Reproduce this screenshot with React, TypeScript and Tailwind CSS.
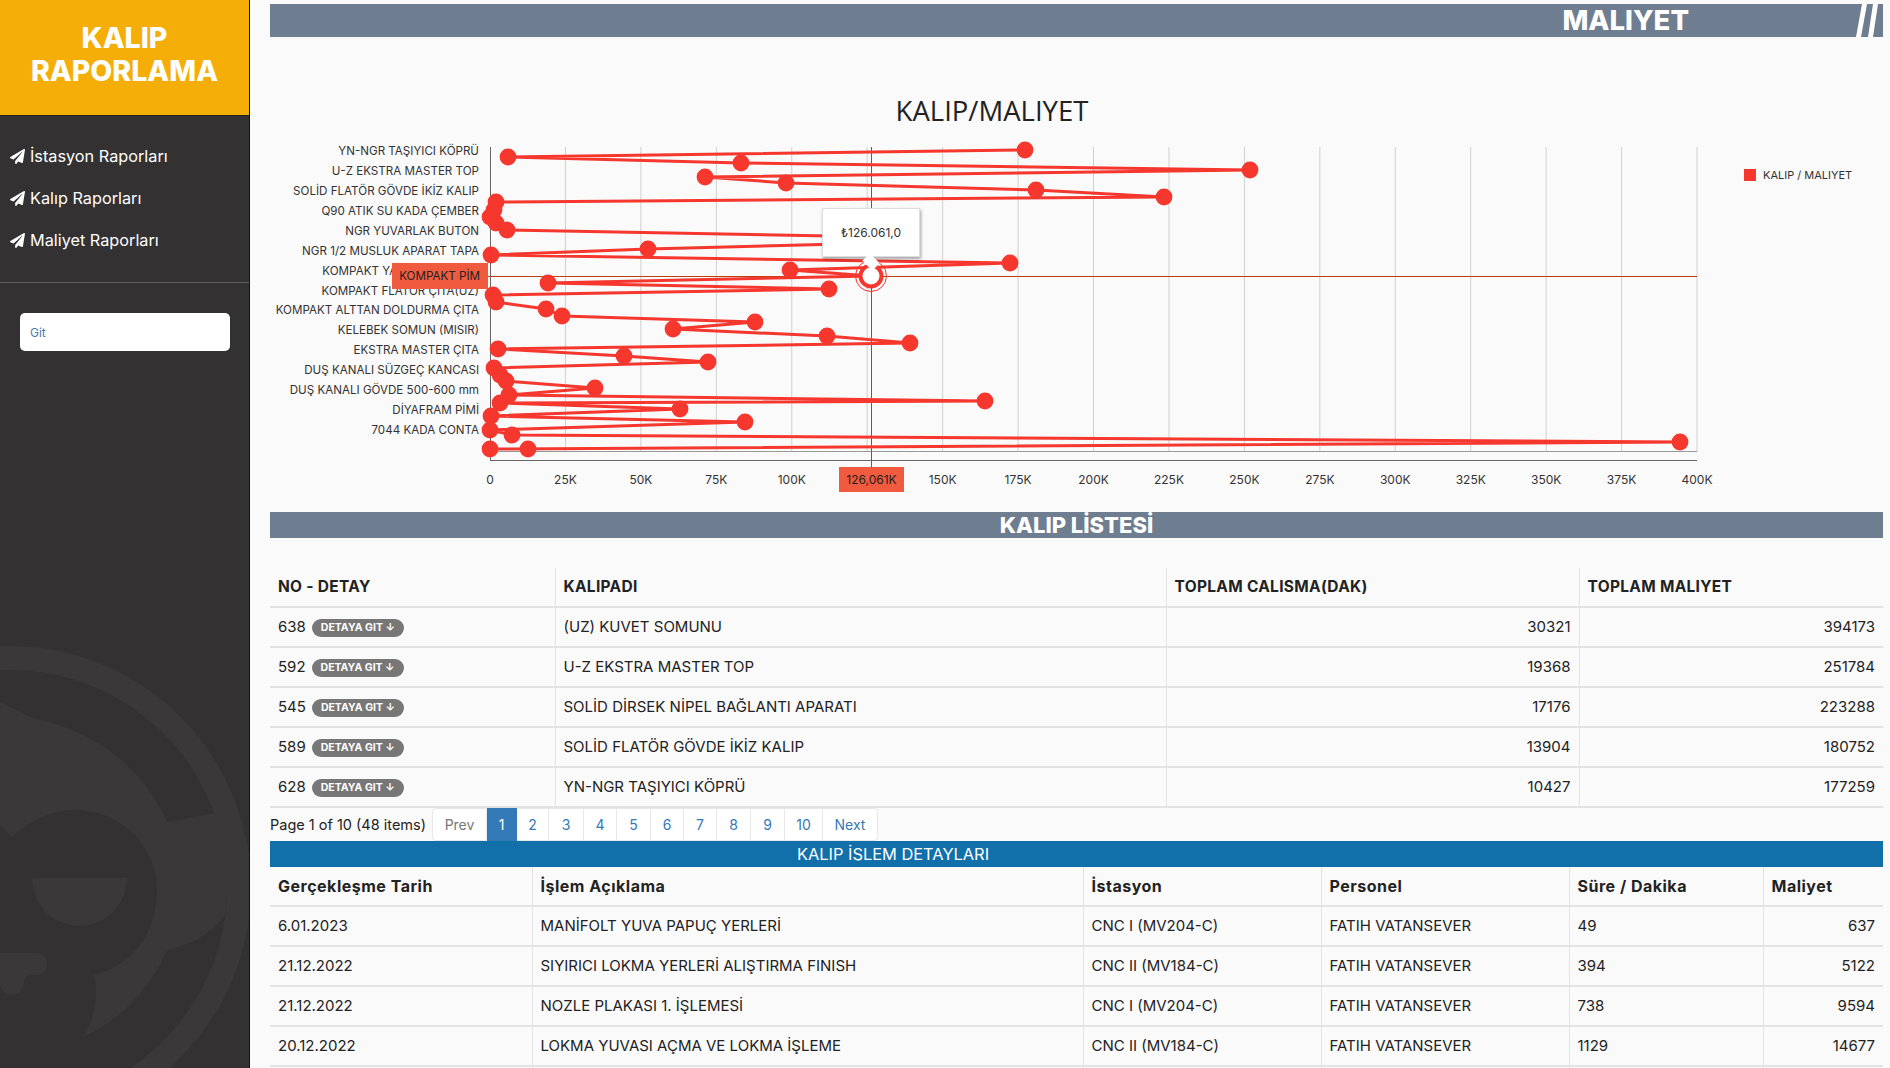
import React from 'react';
import { FaPaperPlane } from 'react-icons/fa';

const categories = [
  'YN-NGR TAŞIYICI KÖPRÜ',
  'U-Z EKSTRA MASTER TOP',
  'SOLİD FLATÖR GÖVDE İKİZ KALIP',
  'Q90 ATIK SU KADA ÇEMBER',
  'NGR YUVARLAK BUTON',
  'NGR 1/2 MUSLUK APARAT TAPA',
  'KOMPAKT YAN GÖVDE ÇITA',
  'KOMPAKT FLATÖR ÇITA(UZ)',
  'KOMPAKT ALTTAN DOLDURMA ÇITA',
  'KELEBEK SOMUN (MISIR)',
  'EKSTRA MASTER ÇITA',
  'DUŞ KANALI SÜZGEÇ KANCASI',
  'DUŞ KANALI GÖVDE 500-600 mm',
  'DİYAFRAM PİMİ',
  '7044 KADA CONTA',
];
const labelY = [151, 171, 191, 211, 231, 251, 271, 291, 310, 330, 350, 370, 390, 410, 430];

const points: [number, number][] = [
  [1025, 150], [508, 157], [741, 163], [1250, 170], [705, 177], [786, 183], [1036, 190], [1164, 197],
  [496, 202], [494, 210], [490, 217], [496, 223], [507, 230], [885, 237], [880, 243], [648, 249],
  [491, 255], [1010, 263], [790, 270], [871, 276], [548, 283], [829, 289], [493, 295], [496, 302],
  [546, 309], [562, 316], [755, 322], [673, 329], [827, 336], [910, 343], [498, 349], [624, 356],
  [708, 362], [494, 368], [500, 375], [506, 381], [595, 388], [509, 395], [985, 401], [500, 403],
  [680, 409], [491, 416], [745, 422], [490, 430], [512, 435], [1680, 442], [490, 449], [528, 449],
];

const ticks = ['0', '25K', '50K', '75K', '100K', '', '150K', '175K', '200K', '225K', '250K', '275K', '300K', '325K', '350K', '375K', '400K'];

const kalipRows = [
  ['638', '(UZ) KUVET SOMUNU', '30321', '394173'],
  ['592', 'U-Z EKSTRA MASTER TOP', '19368', '251784'],
  ['545', 'SOLİD DİRSEK NİPEL BAĞLANTI APARATI', '17176', '223288'],
  ['589', 'SOLİD FLATÖR GÖVDE İKİZ KALIP', '13904', '180752'],
  ['628', 'YN-NGR TAŞIYICI KÖPRÜ', '10427', '177259'],
];

const detayRows = [
  ['6.01.2023', 'MANİFOLT YUVA PAPUÇ YERLERİ', 'CNC I (MV204-C)', 'FATIH VATANSEVER', '49', '637'],
  ['21.12.2022', 'SIYIRICI LOKMA YERLERİ ALIŞTIRMA FINISH', 'CNC II (MV184-C)', 'FATIH VATANSEVER', '394', '5122'],
  ['21.12.2022', 'NOZLE PLAKASI 1. İŞLEMESİ', 'CNC I (MV204-C)', 'FATIH VATANSEVER', '738', '9594'],
  ['20.12.2022', 'LOKMA YUVASI AÇMA VE LOKMA İŞLEME', 'CNC II (MV184-C)', 'FATIH VATANSEVER', '1129', '14677'],
  ['', '', '', '', '', ''],
];

const pages = [
  { label: 'Prev', cls: 'w-[55px] bg-white border-[#e8e8e8] text-[#777] rounded-l-[4px] border-l' },
  { label: '1', cls: 'w-[30px] bg-[#337ab7] border-[#337ab7] text-white' },
  { label: '2', cls: 'w-[32px] bg-white border-[#e8e8e8] text-[#337ab7]' },
  { label: '3', cls: 'w-[35px] bg-white border-[#e8e8e8] text-[#337ab7]' },
  { label: '4', cls: 'w-[33px] bg-white border-[#e8e8e8] text-[#337ab7]' },
  { label: '5', cls: 'w-[34px] bg-white border-[#e8e8e8] text-[#337ab7]' },
  { label: '6', cls: 'w-[33px] bg-white border-[#e8e8e8] text-[#337ab7]' },
  { label: '7', cls: 'w-[33px] bg-white border-[#e8e8e8] text-[#337ab7]' },
  { label: '8', cls: 'w-[34px] bg-white border-[#e8e8e8] text-[#337ab7]' },
  { label: '9', cls: 'w-[34px] bg-white border-[#e8e8e8] text-[#337ab7]' },
  { label: '10', cls: 'w-[38px] bg-white border-[#e8e8e8] text-[#337ab7]' },
  { label: 'Next', cls: 'w-[55px] bg-white border-[#e8e8e8] text-[#337ab7] rounded-r-[4px]' },
];

const Sidebar = () => (
  <aside className="relative w-[250px] shrink-0 h-full bg-[#333132] border-r border-[#111] overflow-hidden flex flex-col">
    <svg className="absolute left-0 bottom-0" width="250" height="448" viewBox="0 0 250 448">
      <circle cx="10" cy="267" r="229" fill="none" stroke="#3a3839" strokeWidth="24" />
      <path
        d="M0 82 L35 99 C95 110 145 150 167 202 L215 193 A217 217 0 0 1 225 295 C210 315 190 325 167 330 C150 370 120 400 83 417 C95 400 98 375 94 355 C135 345 157 310 157 270 C157 225 120 190 75 190 C50 190 28 202 12 217 L0 205 Z"
        fill="#3a3839"
      />
      <path d="M32 258 H127 A47.5 48 0 0 1 32 258 Z" fill="#3a3839" />
      <path
        d="M0 333 H37 C44 333 47 339 47 344 C47 350 43 355 36 355 H30 C25 355 24 360 24 364 C23 371 17 375 11 375 C6 375 2 370 0 366 Z"
        fill="#3a3839"
      />
    </svg>
    <div className="relative h-[116px] bg-[#f5ae08] border-b border-[#222] flex items-center justify-center text-center text-white font-extrabold text-[28.5px] leading-[33px] pb-[7px]">
      <div>
        KALIP
        <br />
        RAPORLAMA
      </div>
    </div>
    <nav className="relative flex flex-col gap-[18px] pt-[28px] pl-[10px] pb-[30px] border-b border-[#5c5c5c] text-white text-[16.25px] leading-[24px]">
      {['İstasyon Raporları', 'Kalıp Raporları', 'Maliyet Raporları'].map((m) => (
        <a key={m} href="#" className="flex items-center gap-[5px]">
          <FaPaperPlane size={15} />
          {m}
        </a>
      ))}
    </nav>
    <div className="relative pt-[30px] pl-5 pr-[19px]">
      <input
        placeholder="Git"
        className="w-full h-[38px] bg-white rounded-[5px] px-[10px] text-[12px] placeholder:text-[#4d78b0] outline-none"
      />
    </div>
  </aside>
);

const Chart = () => (
  <div className="relative h-[475px]">
    <svg width="1613" height="475" viewBox="270 37 1613 475" className="block">
      <text x="992" y="121" textAnchor="middle" fontSize="27.5" fill="#222" className="font-['Open_Sans',sans-serif]">
        KALIP/MALIYET
      </text>
      {ticks.map((_, i) =>
        i > 0 ? <line key={i} x1={490 + i * 75.44} x2={490 + i * 75.44} y1="147" y2="452" stroke="#d0d0d0" /> : null
      )}
      <line x1="490.5" x2="490.5" y1="147" y2="461" stroke="#666" />
      <line x1="490" x2="1697" y1="451.5" y2="451.5" stroke="#999" />
      <line x1="490" x2="1697" y1="460.5" y2="460.5" stroke="#666" />
      {categories.map((c, i) => (
        <text key={c} x="479" y={labelY[i] + 4} textAnchor="end" fontSize="11.6" fill="#333">
          {c}
        </text>
      ))}
      {ticks.map((t, i) => (
        <text key={i} x={490 + i * 75.44} y="484" textAnchor="middle" fontSize="12" fill="#333">
          {t}
        </text>
      ))}
      <line x1="871.5" x2="871.5" y1="147" y2="467" stroke="#b8400f" />
      <line x1="488" x2="1697" y1="276.5" y2="276.5" stroke="#b8400f" />
      <polyline
        points={points.map((p) => p.join(',')).join(' ')}
        fill="none"
        stroke="#f5372e"
        strokeWidth="3"
        strokeLinejoin="round"
      />
      {points.map(([x, y], i) =>
        x === 871 ? null : <circle key={i} cx={x} cy={y} r="8.4" fill="#f5372e" />
      )}
      <circle cx="871" cy="276" r="15.5" fill="none" stroke="#f5372e" />
      <circle cx="871" cy="276" r="10.5" fill="#fff" stroke="#f5372e" strokeWidth="4" />
      <rect x="1744" y="169" width="12" height="12" fill="#f5372e" />
      <text x="1763" y="179" fontSize="11" fill="#333">
        KALIP / MALIYET
      </text>
    </svg>
    {/* crosshair labels and tooltip */}
    <div className="absolute left-[122px] top-[226px] w-[96px] h-[26px] bg-[#f05a3e] text-[#222] text-[11.6px] leading-[27px] text-right pr-[8px]">
      KOMPAKT PİM
    </div>
    <div className="absolute left-[569px] top-[430px] w-[65px] h-[25px] bg-[#f05a3e] text-[#222] text-[12px] leading-[25px] text-center">
      126,061K
    </div>
    <div className="absolute left-[552px] top-[171px] w-[98px] h-[49px] bg-white border border-[#ddd] shadow-[1px_2px_3px_rgba(0,0,0,0.35)] flex items-center justify-center text-[12px] text-[#333]">
      ₺126.061,0
      <div className="absolute left-[41px] top-[46px] w-[14px] h-[14px] bg-white rotate-45 scale-y-75" />
    </div>
  </div>
);

const SectionBar = ({ children }: { children: React.ReactNode }) => (
  <div className="h-[26px] bg-[#6e7d90] text-white text-center font-extrabold text-[22px] leading-[26px]">
    {children}
  </div>
);

const KalipTable = () => (
  <table className="w-full table-fixed mt-[30px] text-[15px] text-[#222]">
    <colgroup>
      <col className="w-[285px]" />
      <col className="w-[611px]" />
      <col className="w-[413px]" />
      <col className="w-[304px]" />
    </colgroup>
    <thead>
      <tr className="h-[39px] border-b-2 border-[#e3e3e3] text-left font-bold text-[15.5px] tracking-[0.3px]">
        <th className="px-2">NO - DETAY</th>
        <th className="px-2 border-l border-[#e3e3e3]">KALIPADI</th>
        <th className="px-2 border-l border-[#e3e3e3]">TOPLAM CALISMA(DAK)</th>
        <th className="px-2 border-l border-[#e3e3e3]">TOPLAM MALIYET</th>
      </tr>
    </thead>
    <tbody>
      {kalipRows.map((r) => (
        <tr key={r[0]} className="h-[40px] border-b-2 border-[#e3e3e3]">
          <td className="px-2">
            {r[0]}
            <span className="inline-block ml-[6px] align-[1px] h-[18px] w-[92px] rounded-full bg-[#777] text-white text-[10.5px] leading-[18px] font-bold text-center">
              DETAYA GIT ↓
            </span>
          </td>
          <td className="px-2 border-l border-[#e3e3e3]">{r[1]}</td>
          <td className="px-2 border-l border-[#e3e3e3] text-right">{r[2]}</td>
          <td className="px-2 border-l border-[#e3e3e3] text-right">{r[3]}</td>
        </tr>
      ))}
    </tbody>
  </table>
);

const Pagination = () => (
  <div className="flex items-center h-[33px] text-[14.5px] text-[#222]">
    <span className="w-[162px]">Page 1 of 10 (48 items)</span>
    <div className="flex h-full text-[14px]">
      {pages.map((p) => (
        <a key={p.label} href="#" className={`flex items-center justify-center border-y border-r ${p.cls}`}>
          {p.label}
        </a>
      ))}
    </div>
  </div>
);

const DetayTable = () => (
  <table className="w-full table-fixed text-[15px] text-[#222]">
    <colgroup>
      <col className="w-[262px]" />
      <col className="w-[551px]" />
      <col className="w-[238px]" />
      <col className="w-[248px]" />
      <col className="w-[194px]" />
      <col className="w-[120px]" />
    </colgroup>
    <thead>
      <tr className="h-[39px] border-b-2 border-[#e3e3e3] text-left font-bold text-[16px] tracking-[0.5px]">
        {['Gerçekleşme Tarih', 'İşlem Açıklama', 'İstasyon', 'Personel', 'Süre / Dakika', 'Maliyet'].map((h, i) => (
          <th key={h} className={i === 0 ? 'px-2' : 'px-2 border-l border-[#e3e3e3]'}>
            {h}
          </th>
        ))}
      </tr>
    </thead>
    <tbody>
      {detayRows.map((r, ri) => (
        <tr key={ri} className="h-[40px] border-b-2 border-[#e3e3e3]">
          {r.map((c, i) => (
            <td
              key={i}
              className={i === 0 ? 'px-2' : i === 5 ? 'px-2 border-l border-[#e3e3e3] text-right' : 'px-2 border-l border-[#e3e3e3]'}
            >
              {c}
            </td>
          ))}
        </tr>
      ))}
    </tbody>
  </table>
);

export default function App() {
  return (
    <div className="flex h-screen overflow-hidden bg-[#fafafa] font-['Inter',sans-serif]">
      <Sidebar />
      <main className="flex-1 min-w-0 pl-5 pr-[7px] pt-1">
        <div className="relative h-[33px] bg-[#6e7d90] flex items-center justify-end pr-[194px] text-white font-extrabold text-[27.5px] leading-none">
          MALIYET
          <svg className="absolute right-0 top-0" width="27" height="33" viewBox="0 0 27 33">
            <polygon points="6,0 11,0 5,33 0,33" fill="#fff" />
            <polygon points="17,0 22,0 17,33 12,33" fill="#fff" />
          </svg>
        </div>
        <Chart />
        <SectionBar>KALIP LİSTESİ</SectionBar>
        <KalipTable />
        <Pagination />
        <div className="h-[26px] bg-[#1170aa] text-white text-[16.4px] leading-[26px]">
          <div className="w-[1246px] text-center">KALIP İSLEM DETAYLARI</div>
        </div>
        <DetayTable />
      </main>
    </div>
  );
}
